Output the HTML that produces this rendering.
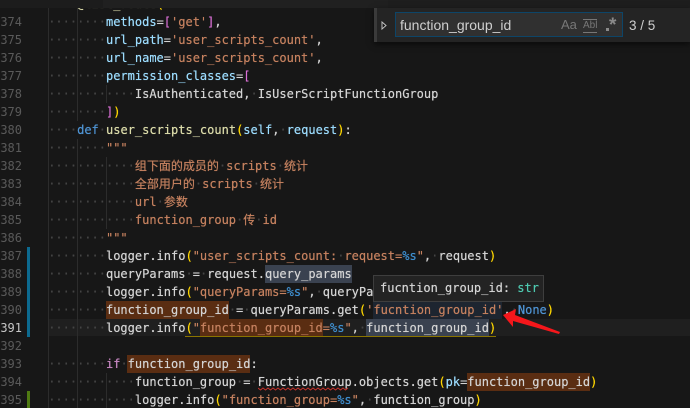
<!DOCTYPE html>
<html>
<head>
<meta charset="utf-8">
<style>
html,body{margin:0;padding:0;background:#171717}
#r{position:relative;width:690px;height:408px;overflow:hidden;background:#171717;font:12px/18px "DejaVu Sans Mono","Noto Sans CJK SC",monospace;color:#d4d4d4}
.l{position:absolute;left:48.2px;white-space:pre;height:18px;filter:blur(.35px);text-shadow:0 0 .5px currentColor}
.n{position:absolute;left:0;width:22px;text-align:right;color:#5a5a5a;height:18px;filter:blur(.35px)}
i{font-style:normal;color:#444}
.v{color:#9cdcfe}.s{color:#c5815f}.k{color:#4f94d4}.f{color:#dcdcaa}.y{color:#ffd700}.m{color:#da70d6}.b{color:#3f8fd0}.p{color:#c586c0}
.h,.g,.u,.d{position:absolute}
.o{background:#5a2d12;height:18px}
.q{background:#3a4250;height:18px}
.w{background:#1d2530;height:18px}
</style>
</head>
<body>
<div id="r">
<div class="h" style="left:48px;top:319px;width:642px;height:17px;background:#1f1f1f"></div>
<div class="h q" style="left:265px;top:265px;width:87px"></div>
<div class="h w" style="left:373px;top:301px;width:129px"></div>
<div class="h o" style="left:106px;top:301px;width:123px"></div>
<div class="h o" style="left:200px;top:319px;width:123px"></div>
<div class="h q" style="left:366px;top:319px;width:123px"></div>
<div class="h o" style="left:127px;top:355px;width:123px"></div>
<div class="h o" style="left:467px;top:373px;width:123px"></div>
<div class="g" style="left:48px;top:8px;width:1px;height:400px;background:#2c2c2c"></div>
<div class="g" style="left:77px;top:8px;width:1px;height:113px;background:#2c2c2c"></div>
<div class="g" style="left:77px;top:139px;width:1px;height:269px;background:#2c2c2c"></div>
<div class="g" style="left:106px;top:85px;width:1px;height:18px;background:#2c2c2c"></div>
<div class="g" style="left:106px;top:157px;width:1px;height:72px;background:#2c2c2c"></div>
<div class="g" style="left:106px;top:373px;width:1px;height:35px;background:#2c2c2c"></div>
<div class="d" style="left:27px;top:247px;width:3px;height:90px;background:#0c6a90"></div>
<div class="d" style="left:27px;top:391px;width:3px;height:17px;background:#4f7a12"></div>

<div class="n" style="top:13px">374</div>
<div class="n" style="top:31px">375</div>
<div class="n" style="top:49px">376</div>
<div class="n" style="top:67px">377</div>
<div class="n" style="top:85px">378</div>
<div class="n" style="top:103px">379</div>
<div class="n" style="top:121px">380</div>
<div class="n" style="top:139px">381</div>
<div class="n" style="top:157px">382</div>
<div class="n" style="top:175px">383</div>
<div class="n" style="top:193px">384</div>
<div class="n" style="top:211px">385</div>
<div class="n" style="top:229px">386</div>
<div class="n" style="top:247px">387</div>
<div class="n" style="top:265px">388</div>
<div class="n" style="top:283px">389</div>
<div class="n" style="top:301px">390</div>
<div class="n" style="top:319px;color:#c6c6c6">391</div>
<div class="n" style="top:337px">392</div>
<div class="n" style="top:355px">393</div>
<div class="n" style="top:373px">394</div>
<div class="n" style="top:391px">395</div>

<div class="l" style="top:-5px"><i>····</i><span class="f">@list_route</span><span class="y">(</span></div>
<div class="l" style="top:13px"><i>········</i><span class="v">methods</span>=<span class="m">[</span><span class="s">'get'</span><span class="m">]</span>,</div>
<div class="l" style="top:31px"><i>········</i><span class="v">url_path</span>=<span class="s">'user_scripts_count'</span>,</div>
<div class="l" style="top:49px"><i>········</i><span class="v">url_name</span>=<span class="s">'user_scripts_count'</span>,</div>
<div class="l" style="top:67px"><i>········</i><span class="v">permission_classes</span>=<span class="m">[</span></div>
<div class="l" style="top:85px"><i>············</i>IsAuthenticated,<i>·</i>IsUserScriptFunctionGroup</div>
<div class="l" style="top:103px"><i>········</i><span class="m">]</span><span class="y">)</span></div>
<div class="l" style="top:121px"><i>····</i><span class="k">def</span><i>·</i><span class="f">user_scripts_count</span><span class="y">(</span><span class="v">self</span>,<i>·</i><span class="v">request</span><span class="y">)</span>:</div>
<div class="l" style="top:139px"><i>········</i><span class="s">"""</span></div>
<div class="l s" style="top:157px"><i>············</i>组下面的成员的<i>·</i>scripts<i>·</i>统计</div>
<div class="l s" style="top:175px"><i>············</i>全部用户的<i>·</i>scripts<i>·</i>统计</div>
<div class="l s" style="top:193px"><i>············</i>url<i>·</i>参数</div>
<div class="l s" style="top:211px"><i>············</i>function_group<i>·</i>传<i>·</i>id</div>
<div class="l" style="top:229px"><i>········</i><span class="s">"""</span></div>
<div class="l" style="top:247px"><i>········</i>logger.info<span class="y">(</span><span class="s">"user_scripts_count:<i>·</i>request=</span><span class="b">%s</span><span class="s">"</span>,<i>·</i>request<span class="y">)</span></div>
<div class="l" style="top:265px"><i>········</i>queryParams<i>·</i>=<i>·</i>request.query_params</div>
<div class="l" style="top:283px"><i>········</i>logger.info<span class="y">(</span><span class="s">"queryParams=</span><span class="b">%s</span><span class="s">"</span>,<i>·</i>queryParams<span class="y">)</span></div>
<div class="l" style="top:301px"><i>········</i>function_group_id<i>·</i>=<i>·</i>queryParams.get<span class="y">(</span><span class="s">'fucntion_group_id'</span>,<i>·</i><span class="k">None</span><span class="y">)</span></div>
<div class="l" style="top:319px"><i>········</i>logger.info<span class="y">(</span><span class="s">"function_group_id=</span><span class="b">%s</span><span class="s">"</span>,<i>·</i>function_group_id<span class="y">)</span></div>
<div class="l" style="top:355px"><i>········</i><span class="p">if</span><i>·</i>function_group_id:</div>
<div class="l" style="top:373px"><i>············</i>function_group<i>·</i>=<i>·</i>FunctionGroup.objects.get<span class="y">(</span><span class="v">pk</span>=function_group_id<span class="y">)</span></div>
<div class="l" style="top:391px"><i>············</i>logger.info<span class="y">(</span><span class="s">"function_group=</span><span class="b">%s</span><span class="s">"</span>,<i>·</i>function_group<span class="y">)</span></div>

<div class="u" style="left:185px;top:336px;width:311px;height:1px;background:#8a7400"></div>
<svg class="u" style="left:258px;top:387px" width="94" height="4" viewBox="0 0 94 4"><path d="M0 1 l2.5 2 l2.5-2 l2.5 2 l2.5-2 l2.5 2 l2.5-2 l2.5 2 l2.5-2 l2.5 2 l2.5-2 l2.5 2 l2.5-2 l2.5 2 l2.5-2 l2.5 2 l2.5-2 l2.5 2 l2.5-2 l2.5 2 l2.5-2 l2.5 2 l2.5-2 l2.5 2 l2.5-2 l2.5 2 l2.5-2 l2.5 2 l2.5-2 l2.5 2 l2.5-2 l2.5 2 l2.5-2 l2.5 2 l2.5-2 l2.5 2 l2.5-2" fill="none" stroke="#c8322c" stroke-width="1"/></svg>

<div style="position:absolute;left:373px;top:275px;width:171px;height:27px;box-sizing:border-box;background:#232323;border:1px solid #3e3e3e;line-height:25px;padding-left:6px;white-space:pre;filter:blur(.35px);text-shadow:0 0 .5px currentColor">fucntion_group_id: <span style="color:#4ec9b0">str</span></div>

<svg style="position:absolute;left:500px;top:306px" width="64" height="32" viewBox="0 0 64 32"><path d="M3 9 L16 3 L15 9 L60 26 L59 28 L13 15 L13 21 Z" fill="#f5171b"/></svg>

<div style="position:absolute;left:0;top:0;width:690px;height:8px;background:#1e1e1e"></div>
<div style="position:absolute;left:0;top:0;width:103px;height:8px;background:#1c1c1c"></div>
<div style="position:absolute;left:103px;top:0;width:285px;height:8px;background:#202020"></div>

<div style="position:absolute;left:374px;top:8px;width:316px;height:34px;background:#242424;box-shadow:0 2px 6px rgba(0,0,0,.6)"></div>
<div style="position:absolute;left:374px;top:8px;width:3px;height:34px;background:#3a3a3a"></div>
<svg style="position:absolute;left:381px;top:21px" width="6" height="9" viewBox="0 0 6 9"><path d="M1 1 L5 4.5 L1 8 Z" fill="#151515" stroke="#c0c0c0" stroke-width="1"/></svg>
<div style="position:absolute;left:395px;top:12px;width:228px;height:25px;box-sizing:border-box;background:#303030;border:1px solid #0d4568"></div>
<div style="position:absolute;left:400px;top:16px;font:14px/18px 'Liberation Sans',sans-serif;color:#cfcfcf;white-space:pre;filter:blur(.3px)">function_group_id</div>
<div style="position:absolute;left:561px;top:17px;font:13px/16px 'Liberation Sans',sans-serif;color:#777;white-space:pre;filter:blur(.3px)">Aa</div>
<div style="position:absolute;left:583px;top:19px;width:14px;height:12px;border-top:1px solid #777;border-bottom:1px solid #777;font:10px/12px 'Liberation Sans',sans-serif;color:#777;text-align:center;filter:blur(.3px)">Abl</div>
<div style="position:absolute;left:606px;top:20px;width:3px;height:3px;margin-top:8px;background:#8a8a8a"></div>
<div style="position:absolute;left:609px;top:15px;font:bold 19px/22px 'Liberation Sans',sans-serif;color:#8a8a8a;filter:blur(.3px)">*</div>
<div style="position:absolute;left:629px;top:17px;font:13.5px/17px 'Liberation Sans',sans-serif;color:#cfcfcf;white-space:pre;filter:blur(.3px)">3 / 5</div>
</div>
</body>
</html>
